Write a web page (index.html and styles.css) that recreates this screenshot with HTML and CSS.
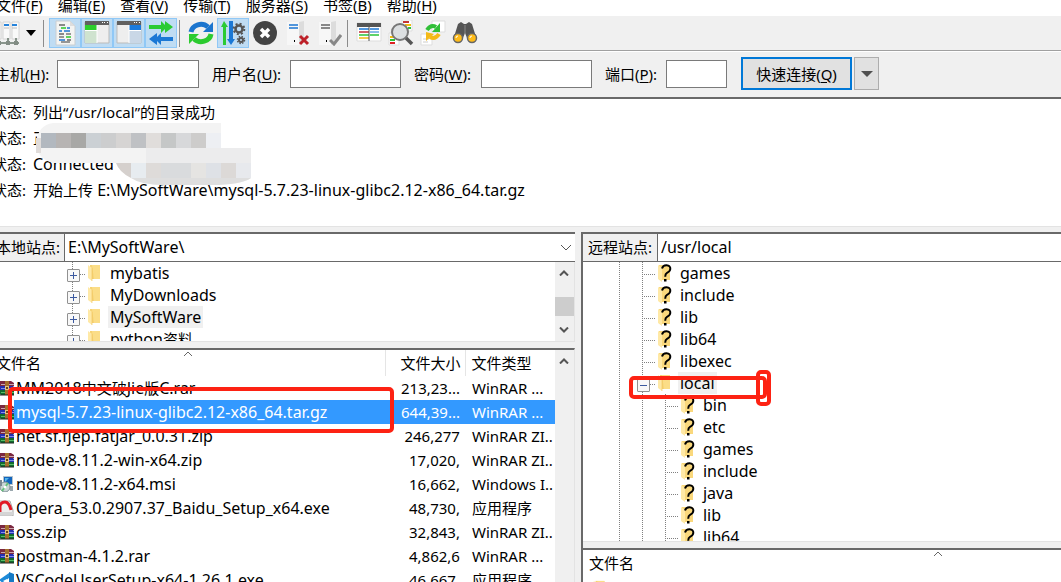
FILE: index.html
```html
<!DOCTYPE html>
<html lang="zh-CN">
<head>
<meta charset="utf-8">
<title>FileZilla</title>
<link rel="stylesheet" href="styles.css">
</head>
<body>
<svg class="defs" aria-hidden="true">
  <symbol id="folder" viewBox="0 0 14 18">
    <path d="M2 1h10v14H2z" fill="#f6d273"/><path d="M4 1h8v14H6z" fill="#fbdd87"/><path d="M0 1l4 3v13l-4-3z" fill="#ffe9a6"/><path d="M4 4v13" stroke="#eebf58" stroke-width=".6"/>
  </symbol>
  <symbol id="unknown" viewBox="0 0 14 18">
    <path d="M1 1h11v15H1z" fill="#fad87c"/><path d="M0 1l4 3v14l-4-3z" fill="#ffe9a6"/>
    <path d="M4 4.5Q5 1.200 8.500 1.300 12.600 1.600 12.300 5 12 7.500 9 8.800 7.200 9.700 7.200 12.800" fill="none" stroke="#000" stroke-width="2"/><path d="M6 15h2.500v2.500H6z"/>
  </symbol>
  <symbol id="rar" viewBox="0 0 16 16">
    <path d="M1 1h12l3 2v3H2L0 4z" fill="#7c2840"/><path d="M3 4h13v1H3z" fill="#c8a8b0"/>
    <path d="M0 6h15l1 1v3H2z" fill="#2430b0"/><path d="M3 8h13v1H3z" fill="#8090e8"/>
    <path d="M0 10h16v5H3L0 13z" fill="#126a2e"/><path d="M3 12h13v1H3z" fill="#57bd66"/>
    <path d="M0 4l2 2v8l-2-1z" fill="#30203a"/><path d="M7 1h4v14H7z" fill="#a5702c"/><path d="M7 6h4v4H7z" fill="#e6c37c"/><path d="M8 7h2v2H8z" fill="#6b431c"/><path d="M2 15h14" stroke="#222" />
  </symbol>
  <symbol id="msi" viewBox="0 0 16 16">
    <path d="M5 0h10v9H5z" fill="#b8c4cc"/><path d="M6 1h8v7H6z" fill="#1265bd"/><path d="M7 2h4L7 6z" fill="#55b6ed"/><path d="M11 10h4v5h-3z" fill="#9aa7ae"/>
    <circle cx="7" cy="11" r="5" fill="#c9d5d5" stroke="#7d9095"/><path d="M7 11l3-4M7 11l-3 4" stroke="#64bf7a" stroke-width="2"/><circle cx="7" cy="11" r="1.500" fill="#fff"/><path d="M0 4h4v6H0z" fill="#7b8790"/>
  </symbol>
  <symbol id="opera" viewBox="0 0 16 16">
    <path d="M1 1h11l3 9v6H0z" fill="#eee" stroke="#aaa"/><path d="M2 12V6q1-4 5-4t6 8" fill="none" stroke="#e11824" stroke-width="3"/><path d="M1 12h14v3H1z" fill="#d5d5d5"/>
  </symbol>
  <symbol id="vscode" viewBox="0 0 16 16">
    <path d="M11 0l5 2v12l-5 2z" fill="#1479c4"/><path d="M11 1v5L6 10l5 3v3L1 8z" fill="#1d8ad8"/><path d="M9 7v5L5 9z" fill="#fff"/>
  </symbol>
  <symbol id="up" viewBox="0 0 10 6"><path d="M1 5.500l4-4 4 4" fill="none" stroke="#555" stroke-width="2"/></symbol>
  <symbol id="down" viewBox="0 0 10 6"><path d="M1 .5l4 4 4-4" fill="none" stroke="#555" stroke-width="2"/></symbol>
  <symbol id="sort" viewBox="0 0 10 6"><path d="M1 5l4-4 4 4" fill="none" stroke="#666"/></symbol>
</svg>
<div class="app">
  <nav class="menu">
    <button>文件(<u>F</u>)</button><button>编辑(<u>E</u>)</button><button>查看(<u>V</u>)</button><button>传输(<u>T</u>)</button><button>服务器(<u>S</u>)</button><button>书签(<u>B</u>)</button><button>帮助(<u>H</u>)</button>
  </nav>
  <div class="toolbar">
    <button class="tool" aria-label="站点管理器"><svg viewBox="0 0 26 26"><path d="M0 2h6v17H0zM8 2h7v17H8zM17 2h7v17h-7z" fill="#f9f9f9" stroke="#d4d4d4"/><path d="M1 5h4M9 5h5M17 5h5" stroke="#2683db" stroke-width="2"/><path d="M1 8h4M9 8h5M17 8h5" stroke="#bbb"/><path d="M1 23h23M4 18v5M13 18v5M21 18v5" stroke="#67776b" stroke-width="1.500"/><path d="M2 21h4v4H2zM11 21h4v4h-4zM19 21h4v4h-4z" fill="#828c84"/></svg></button>
    <button class="more" aria-label="站点列表"><svg viewBox="0 0 10 6"><path d="M0 0h10L5 6z"/></svg></button>
    <i class="sep wide"></i>
    <button class="tool on" aria-label="消息日志"><svg viewBox="0 0 26 26"><path d="M4 1h14l5 5v19H4z" fill="#f4f4f2" stroke="#c9ced2"/><path d="M18 1v5h5" fill="#ddd"/><g stroke-width="1.500"><path d="M7 5h6M7 14h5M15 20h4" stroke="#666"/><path d="M9 8h5M14 17h5" stroke="#2cc72c"/><path d="M15 8h3M7 11h3M12 11h6M7 20h6" stroke="#1b76d2"/><path d="M14 14h5M7 17h5M9 22h9" stroke="#777"/></g></svg></button>
    <button class="tool on" aria-label="本地目录树"><svg viewBox="0 0 26 26"><path d="M1 2h24v21H1z" fill="#eee" stroke="#bbb"/><path d="M1 1h24v4H1z" fill="#606060"/><path d="M18 2h1v1h-1zM20 2h1v1h-1zM23 2h1v1h-1z" fill="#fff"/><path d="M1 5h12v5H1z" fill="#2ccf2c"/><path d="M1 11h12v12H1z" fill="#cfe3cf"/><path d="M13 5v18M1 10.500h12" stroke="#fff"/></svg></button>
    <button class="tool on" aria-label="远程目录树"><svg viewBox="0 0 26 26"><path d="M1 2h24v21H1z" fill="#eee" stroke="#bbb"/><path d="M1 1h24v4H1z" fill="#606060"/><path d="M18 2h1v1h-1zM20 2h1v1h-1zM23 2h1v1h-1z" fill="#fff"/><path d="M13 5h12v5H13z" fill="#1b7bdc"/><path d="M13 11h12v12H13z" fill="#c9d7e6"/><path d="M13 5v18M13 10.500h12" stroke="#fff"/></svg></button>
    <button class="tool on" aria-label="传输队列"><svg viewBox="0 0 26 26"><path d="M1 5h12V1l4 4V1l8 6-8 6V9l-4 4V9H1z" fill="#2bcb33"/><path d="M25 17H13v-4l-4 4v-4l-8 6 8 6v-4l4 4v-4h12z" fill="#1b78d5"/></svg></button>
    <i class="sep"></i>
    <button class="tool" aria-label="刷新"><svg viewBox="0 0 26 26"><path d="M3 12a10 9 0 0 1 17-5" fill="none" stroke="#1c75ce" stroke-width="5"/><path d="M25 2v10H15z" fill="#1c75ce"/><path d="M23 14a10 9 0 0 1-17 5" fill="none" stroke="#2ccb2f" stroke-width="5"/><path d="M1 24V14h10z" fill="#2ccb2f"/></svg></button>
    <button class="tool on" aria-label="处理队列"><svg viewBox="0 0 26 26"><path d="M4 1l4 6H6v18H3V7H1z" fill="#2bcb33"/><path d="M11 25l-4-6h2V1h4v18h2z" fill="#1b78d5"/><g fill="none" stroke="#555"><circle cx="19" cy="9" r="3.500" stroke-width="2.500"/><circle cx="19" cy="9" r="5.300" stroke-width="2" stroke-dasharray="2 2.160"/><circle cx="21" cy="20" r="2" stroke-width="2"/><circle cx="21" cy="20" r="3.500" stroke-width="1.500" stroke-dasharray="1.500 1.250"/></g></svg></button>
    <button class="tool" aria-label="取消"><svg viewBox="0 0 26 26"><circle cx="13" cy="13" r="12" fill="#444"/><path d="M9 9l8 8M17 9l-8 8" stroke="#fff" stroke-width="3.500"/></svg></button>
    <button class="tool" aria-label="断开连接"><svg viewBox="0 0 26 26"><path d="M3 2h12l5-1v18l-5 6H3z" fill="#dcdcdc"/><path d="M3 2h12v23H3z" fill="#f7f7f7"/><path d="M5 5h9M5 8h9" stroke="#1b76d2" stroke-width="1.500"/><path d="M10 20h1v2h-1z"/><path d="M16 16l8 8M24 16l-8 8" stroke="#bd2028" stroke-width="3"/></svg></button>
    <button class="tool" aria-label="重新连接"><svg viewBox="0 0 26 26"><path d="M3 2h12l5-1v18l-5 6H3z" fill="#dcdcdc"/><path d="M3 2h12v23H3z" fill="#f7f7f7"/><path d="M5 5h9M5 8h9" stroke="#666" stroke-width="1.500"/><path d="M10 20h1v2h-1z"/><path d="M14 20l4 4 7-9" fill="none" stroke="#888" stroke-width="3"/></svg></button>
    <i class="sep"></i>
    <button class="tool" aria-label="目录对比"><svg viewBox="0 0 26 26"><path d="M1 3h24v18H1z" fill="#fff" stroke="#ddd"/><path d="M1 3h24v4H1z" fill="#555"/><path d="M3 9h10M14 9h9" stroke="#1b76d2" stroke-width="1.500"/><path d="M3 12h10" stroke="#c12b35" stroke-width="1.500"/><path d="M14 12h9" stroke="#1b76d2"/><path d="M3 15h10M14 15h9" stroke="#2bc33b" stroke-width="1.500"/><path d="M3 18h10" stroke="#f1b913" stroke-width="1.500"/><path d="M13 7v14" stroke="#555"/></svg></button>
    <button class="tool" aria-label="过滤器"><svg viewBox="0 0 26 26"><path d="M14 0h10v11H14zM1 13h10v12H1z" fill="#fff" stroke="#ddd"/><path d="M15 2h6" stroke="#c43434" stroke-width="2"/><path d="M17 5h6M2 17h5" stroke="#f1b913" stroke-width="2"/><path d="M20 8h3M2 20h5" stroke="#2bc33b" stroke-width="2"/><path d="M2 23h5" stroke="#d22" stroke-width="2"/><path d="M17 17l7 7" stroke="#555" stroke-width="3.500"/><circle cx="12" cy="12" r="8" fill="#d9dddf" fill-opacity=".9" stroke="#777" stroke-width="2"/></svg></button>
    <button class="tool" aria-label="同步浏览"><svg viewBox="0 0 26 26"><path d="M12 1h13v11H12zM1 14h11v11H1z" fill="#fff" stroke="#ddd"/><path d="M3 19h6M3 22h5" stroke="#ccc"/><path d="M7 10q4-6 9-3" fill="none" stroke="#30bf37" stroke-width="4"/><path d="M20 3v9h-8z" fill="#30bf37"/><path d="M19 14q-4 6-9 3" fill="none" stroke="#f4b917" stroke-width="4"/><path d="M6 21v-9l8 2z" fill="#f4b917"/></svg></button>
    <button class="tool" aria-label="搜索"><svg viewBox="0 0 26 26"><path d="M6 4l3-2 3 2h2l3-2 3 2 4 13-9 1-2-5-2 5-9-1z" fill="#555"/><path d="M13 5v9" stroke="#888"/><circle cx="6" cy="18" r="4.500" fill="#ffbc19" stroke="#666" stroke-width="1.500"/><circle cx="20" cy="18" r="4.500" fill="#ffbc19" stroke="#666" stroke-width="1.500"/><path d="M4 18q0-2 2-2M18 18q0-2 2-2" fill="none" stroke="#fff"/></svg></button>
  </div>
  <form class="quick">
    <label for="host">主机(<u>H</u>):</label><input id="host" type="text">
    <label for="user">用户名(<u>U</u>):</label><input id="user" type="text">
    <label for="pass">密码(<u>W</u>):</label><input id="pass" type="password">
    <label for="port">端口(<u>P</u>):</label><input id="port" type="text">
    <button class="connect" type="button">快速连接(<u>Q</u>)</button>
    <button class="history" type="button" aria-label="历史"><svg viewBox="0 0 12 6"><path d="M0 0h12L6 6z" fill="#505050"/></svg></button>
  </form>
  <section class="log">
    <p><b>状态:</b><span>列出“/usr/local”的目录成功</span></p>
    <p><b>状态:</b><span>正</span></p>
    <p><b>状态:</b><span class="wide-text">Connected</span></p>
    <p><b>状态:</b><span class="wide-text"><span class="cjk">开始上传</span> E:\MySoftWare\mysql-5.7.23-linux-glibc2.12-x86_64.tar.gz</span></p>
    <svg class="mosaic" viewBox="0 0 218 62" aria-hidden="true">
      <path d="M17 0h168v25h30v30q-10 7-40 7h-48q-30 0-46-22H17Q1 36 0 20 2 2 17 0z" fill="#f3f3f3"/>
      <path d="M0 15h5v15H0z" fill="#e0dcda"/><path d="M5 10h15v15H5z" fill="#b2b8bf"/><path d="M20 10h15v15H20z" fill="#b7b4b3"/><path d="M35 10h15v15H35z" fill="#a8a8a6"/><path d="M50 10h15v15H50z" fill="#cbd0d4"/><path d="M65 10h15v15H65z" fill="#cccdce"/><path d="M80 10h15v15H80z" fill="#d6d4d3"/><path d="M95 10h15v15H95z" fill="#bfc1c4"/><path d="M110 10h15v15h-15z" fill="#e0dddb"/><path d="M125 10h15v15h-15z" fill="#c5c7c7"/><path d="M140 10h15v15h-15z" fill="#d7d8da"/><path d="M155 10h15v15h-15z" fill="#cdcccb"/><path d="M170 10h15v15h-15z" fill="#edeff3"/>
      <path d="M80 40h15v15q-12-6-15-15z" fill="#d5d0cd"/><path d="M95 40h15v15H95z" fill="#e7ecf0"/><path d="M110 40h15v15h-15z" fill="#dedbd9"/><path d="M125 40h30v15h-30z" fill="#d9dbdd"/><path d="M155 40h15v15h-15z" fill="#e5e4e2"/><path d="M170 40h15v15h-15z" fill="#dee1e6"/><path d="M185 40h15v15h-15z" fill="#dcd9d7"/><path d="M200 40h15v15h-15z" fill="#e7e9ed"/>
      <path d="M95 55h120q-10 7-40 7h-48q-22 0-32-7z" fill="#dedede"/><path d="M110 25h105v15H110z" fill="#ececed"/>
    </svg>
  </section>
  <main class="panes">
    <section class="pane">
      <div class="address"><label for="local">本地站点:</label><input id="local" type="text" value="E:\MySoftWare\"><svg class="drop" viewBox="0 0 10 6"><path d="M0 0l5 5 5-5" fill="none" stroke="#555"/></svg></div>
      <div class="view local-view">
        <ul class="tree">
          <li><i class="branch box"></i><svg><use href="#folder"/></svg><span>mybatis</span></li>
          <li><i class="branch box"></i><svg><use href="#folder"/></svg><span>MyDownloads</span></li>
          <li><i class="branch box"></i><svg><use href="#folder"/></svg><span class="current">MySoftWare</span></li>
          <li><i class="branch box"></i><svg><use href="#folder"/></svg><span>python<small class="cjk">资料</small></span></li>
        </ul>
        <div class="scroll"><svg><use href="#up"/></svg><i class="thumb"></i><svg><use href="#down"/></svg></div>
      </div>
      <div class="view files">
        <svg class="sort"><use href="#sort"/></svg>
        <table>
          <thead><tr><th>文件名</th><th class="size">文件大小</th><th class="type">文件类型</th></tr></thead>
          <tbody>
            <tr><td><svg><use href="#rar"/></svg><span>MM2018<small class="cjk">中文破</small>Jie<small class="cjk">版</small>C.rar</span></td><td>213,23...</td><td>WinRAR ...</td></tr>
            <tr class="selected"><td><svg><use href="#rar"/></svg>mysql-5.7.23-linux-glibc2.12-x86_64.tar.gz</td><td>644,39...</td><td>WinRAR ...</td></tr>
            <tr><td><svg><use href="#rar"/></svg>net.sf.fjep.fatjar_0.0.31.zip</td><td>246,277</td><td>WinRAR ZI..</td></tr>
            <tr><td><svg><use href="#rar"/></svg>node-v8.11.2-win-x64.zip</td><td>17,020,</td><td>WinRAR ZI..</td></tr>
            <tr><td><svg><use href="#msi"/></svg>node-v8.11.2-x64.msi</td><td>16,662,</td><td>Windows I..</td></tr>
            <tr><td><svg><use href="#opera"/></svg>Opera_53.0.2907.37_Baidu_Setup_x64.exe</td><td>48,730,</td><td>应用程序</td></tr>
            <tr><td><svg><use href="#rar"/></svg>oss.zip</td><td>32,843,</td><td>WinRAR ZI..</td></tr>
            <tr><td><svg><use href="#rar"/></svg>postman-4.1.2.rar</td><td>4,862,6</td><td>WinRAR ...</td></tr>
            <tr><td><svg><use href="#vscode"/></svg>VSCodeUserSetup-x64-1.26.1.exe</td><td>46,667,</td><td>应用程序</td></tr>
          </tbody>
        </table>
        <div class="scroll"><svg><use href="#up"/></svg></div>
        <i class="mark mark-file"></i>
      </div>
    </section>
    <section class="pane remote">
      <div class="address"><label for="remote">远程站点:</label><input id="remote" type="text" value="/usr/local"></div>
      <div class="view remote-view">
        <ul class="tree">
          <li><i class="guide"></i><i class="branch"></i><svg><use href="#unknown"/></svg><span>games</span></li>
          <li><i class="guide"></i><i class="branch"></i><svg><use href="#unknown"/></svg><span>include</span></li>
          <li><i class="guide"></i><i class="branch"></i><svg><use href="#unknown"/></svg><span>lib</span></li>
          <li><i class="guide"></i><i class="branch"></i><svg><use href="#unknown"/></svg><span>lib64</span></li>
          <li><i class="guide"></i><i class="branch"></i><svg><use href="#unknown"/></svg><span>libexec</span></li>
          <li><i class="guide"></i><i class="branch box open"></i><svg><use href="#folder"/></svg><span class="current">local</span></li>
          <li><i class="guide"></i><i class="guide"></i><i class="branch"></i><svg><use href="#unknown"/></svg><span>bin</span></li>
          <li><i class="guide"></i><i class="guide"></i><i class="branch"></i><svg><use href="#unknown"/></svg><span>etc</span></li>
          <li><i class="guide"></i><i class="guide"></i><i class="branch"></i><svg><use href="#unknown"/></svg><span>games</span></li>
          <li><i class="guide"></i><i class="guide"></i><i class="branch"></i><svg><use href="#unknown"/></svg><span>include</span></li>
          <li><i class="guide"></i><i class="guide"></i><i class="branch"></i><svg><use href="#unknown"/></svg><span>java</span></li>
          <li><i class="guide"></i><i class="guide"></i><i class="branch"></i><svg><use href="#unknown"/></svg><span>lib</span></li>
          <li><i class="guide"></i><i class="guide"></i><i class="branch"></i><svg><use href="#unknown"/></svg><span>lib64</span></li>
        </ul>
        <i class="mark mark-dir"></i><i class="mark mark-end"></i>
      </div>
      <div class="view files">
        <svg class="sort"><use href="#sort"/></svg>
        <table>
          <thead><tr><th>文件名</th></tr></thead>
          <tbody><tr><td><svg class="parent"><use href="#folder"/></svg></td></tr></tbody>
        </table>
      </div>
    </section>
  </main>
</div>
</body>
</html>
```

FILE: styles.css
```css
* { box-sizing: border-box; }
body {
  margin: 0;
  overflow: hidden;
  background: #f0f0f0;
  color: #000;
  font: 15px/22px "Noto Sans", "Noto Sans CJK SC", sans-serif;
}
button, input { font: inherit; color: inherit; padding: 0; border: 0; border-radius: 0; background: none; }
u { text-underline-offset: 2px; }
svg { display: block; flex: none; }
.defs { position: absolute; width: 0; height: 0; }
.wide-text { font-size: 16px; }
.cjk { font-size: 15px; }

/* The window continues past the left and top edges of the viewport. */
.app {
  display: flex;
  flex-direction: column;
  height: calc(100vh + 6px);
  margin: -6px 0 0 -8px;
}

.menu { display: flex; gap: 15px; height: 22px; padding-left: 4px; background: #fff; }

.toolbar { display: flex; align-items: center; height: 35px; border-bottom: 1px solid #a0a0a0; }
.tool { width: 32px; height: 30px; display: grid; place-items: center; }
.tool svg { width: 26px; height: 26px; }
.tool.on { background: #bfdcf3; border: 1px solid #90c8f6; }
.more { width: 12px; display: grid; place-items: end; }
.more svg { width: 10px; height: 6px; }
.sep { width: 1px; height: 27px; margin: 0 5px 0 2px; background: #8c8c8c; }
.sep.wide { margin-left: 7px; }

.quick {
  display: grid;
  grid-template-columns: 62px 142px 91px 111px 80px 111px 74px 61px 125px 27px;
  align-items: center;
  height: 46px;
  padding: 0 0 2px 3px;
  border-top: 1px solid #fff;
}
.quick label { padding-left: 13px; white-space: nowrap; }
.quick label:first-child { padding-left: 0; }
.quick input { height: 28px; width: 100%; min-width: 0; border: 1px solid #7a7a7a; background: #fff; }
.connect { height: 33px; margin-left: 14px; background: #e1e1e1; border: 2px solid #0078d7; }
.history { height: 33px; margin-left: 2px; display: grid; place-items: center; background: #e1e1e1; border: 1px solid #adadad; }
.history svg { width: 12px; height: 6px; }

.log {
  position: relative;
  height: 130px;
  border-top: 2px solid #696969;
  border-bottom: 1px solid #e3e3e3;
  background: #fff;
}
.log p { display: flex; height: 26px; margin: 0; align-items: center; white-space: nowrap; }
.log b { width: 41px; font-weight: 400; }
.mosaic { position: absolute; left: 44px; top: 24px; width: 218px; height: 62px; }

.panes {
  flex: 1;
  min-height: 0;
  display: grid;
  grid-template-columns: minmax(0, 1fr) calc(45% - 1px);
  column-gap: 6px;
  padding-top: 5px;
}
.pane { display: flex; flex-direction: column; min-height: 0; }
.address { display: flex; align-items: center; flex: none; height: 30px; border-top: 2px solid #696969; border-bottom: 1px solid #696969; background: #fff; }
.address label { align-self: stretch; width: 73px; padding: 2px 0 0 4px; background: #f0f0f0; border-right: 1px solid #696969; white-space: nowrap; }
.address input { flex: 1; min-width: 0; height: 25px; margin-bottom: 2px; padding-left: 3px; outline: 0; font-size: 16px; }
.drop { width: 10px; height: 6px; margin-right: 4px; }
.view { position: relative; display: flex; background: #fff; }
.local-view { flex: none; height: 80px; border-bottom: 1px solid #e3e3e3; border-right: 1px solid #e3e3e3; }
.files { flex: 1; min-height: 0; margin-top: 6px; border-top: 2px solid #696969; }
.pane:first-child .files { border-right: 1px solid #e3e3e3; }

.tree { flex: 1; margin: 0; padding: 0 0 0 80px; overflow: hidden; list-style: none; font-size: 16px; }
.tree li { display: flex; align-items: center; height: 22px; }
.tree svg { width: 14px; height: 18px; }
.tree span { margin-left: 6px; padding: 0 2px; line-height: 22px; white-space: nowrap; }
.tree .current { background: #f0f0f0; }
.guide, .branch {
  align-self: stretch;
  width: 23px;
  background: repeating-linear-gradient(#808080 0 1px, transparent 1px 2px) 0 0 / 1px 100% no-repeat;
}
.branch {
  position: relative;
  width: 16px;
  background:
    repeating-linear-gradient(#808080 0 1px, transparent 1px 2px) 0 0 / 1px 100% no-repeat,
    repeating-linear-gradient(90deg, #808080 0 1px, transparent 1px 2px) 0 12px / 13px 1px no-repeat;
}
/* Expander button, centred on the guide line. */
.box::before {
  content: "";
  position: absolute;
  left: -5px;
  top: 7px;
  width: 11px;
  height: 11px;
  border: 1px solid #919191;
  border-radius: 1px;
  background:
    linear-gradient(#3c5aa0, #3c5aa0) center / 7px 1px no-repeat,
    linear-gradient(#3c5aa0, #3c5aa0) center / 1px 7px no-repeat,
    #f8f8f8;
}
.box.open::before { background: linear-gradient(#3c5aa0, #3c5aa0) center / 7px 1px no-repeat, #f8f8f8; }

.scroll { display: flex; flex-direction: column; align-items: center; flex: none; width: 19px; padding: 8px 0; background: #f0f0f0; }
.scroll svg { width: 10px; height: 6px; }
.thumb { width: 19px; height: 21px; margin: 21px 0 11px; background: #cdcdcd; }

table { flex: 1; align-self: flex-start; border-collapse: collapse; table-layout: fixed; width: 100%; min-width: 0; }
th { height: 26px; padding: 0 0 0 4px; font-weight: 400; text-align: left; border-right: 1px solid #e5e5e5; }
th.size { width: 80px; text-align: right; padding-right: 5px; }
th.type { width: 89px; padding-left: 5px; border-right: 0; }
td { height: 24px; padding: 0; white-space: nowrap; overflow: hidden; line-height: 22px; }
td:first-child { display: flex; align-items: center; gap: 2px; padding-left: 6px; font-size: 16px; }
td:nth-child(2) { text-align: right; padding-right: 6px; }
td:nth-child(3) { padding-left: 6px; }
td svg { width: 16px; height: 16px; }
.selected td { background: #3399ff; color: #fff; }
.selected td:first-child { background: linear-gradient(#3399ff, #3399ff) 22px 0 no-repeat; }
.sort { position: absolute; left: 191px; top: 1px; width: 10px; height: 6px; }

.remote { border-left: 2px solid #696969; }
.remote .address label { width: 75px; padding-left: 5px; }
.remote-view { flex: none; height: 280px; border-bottom: 1px solid #e3e3e3; }
.remote .tree { padding-left: 36px; }
.remote .sort { left: 350px; }
.remote th { padding-left: 6px; border: 0; }
.parent { margin-left: 3px; }

/* Hand-drawn highlights over the panes. */
.mark { position: absolute; border: 4px solid #fd2213; border-radius: 5px; }
.mark-file { left: 16px; top: 37px; width: 386px; height: 46px; }
.mark-dir { left: 46px; top: 114px; width: 138px; height: 23px; }
.mark-end { left: 173px; top: 108px; width: 15px; height: 36px; }
```
